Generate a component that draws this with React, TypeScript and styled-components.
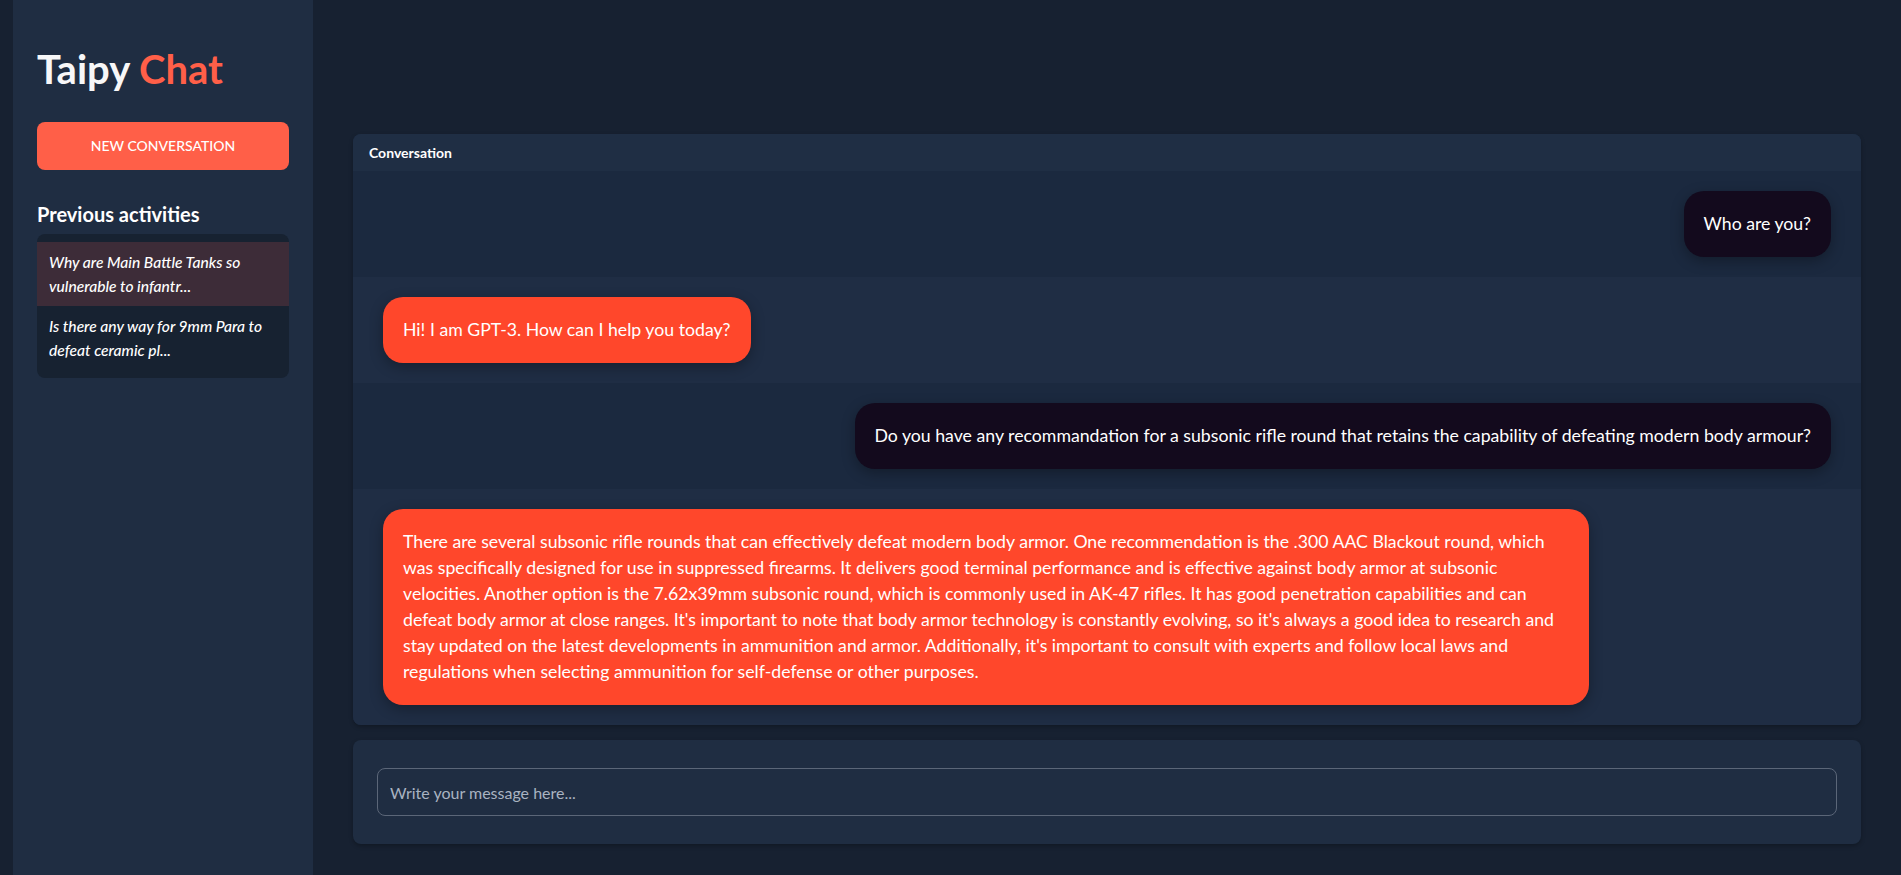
import styled, { createGlobalStyle } from "styled-components";

const GlobalStyle = createGlobalStyle`
  html, body {
    margin: 0;
    padding: 0;
    background-color: #172131;
    font-family: Lato, "Open Sans", sans-serif;
    color: #ffffff;
  }
  * {
    box-sizing: border-box;
  }
`;

const Page = styled.div`
  display: flex;
  height: 875px;
  padding-left: 13px;
  overflow: hidden;
`;

const Sidebar = styled.aside`
  width: 300px;
  flex-shrink: 0;
  display: flex;
  flex-direction: column;
  padding: 45px 24px 0;
  background-color: #1f2d42;
`;

const Title = styled.h1`
  margin: 0;
  font-size: 40px;
  line-height: 48px;
  font-weight: 700;
  color: #f7f7f8;
`;

const Accent = styled.span`
  color: #ff5f48;
`;

const NewButton = styled.button`
  margin-top: 29px;
  height: 48px;
  padding-bottom: 3px;
  border: none;
  border-radius: 8px;
  background-color: #ff5f48;
  color: #ffffff;
  font-family: inherit;
  font-size: 14px;
  font-weight: 500;
  text-transform: uppercase;
  cursor: pointer;
`;

const SectionTitle = styled.h2`
  margin: 32px 0 8px;
  font-size: 20px;
  line-height: 24px;
  font-weight: 700;
`;

const ActivityList = styled.ul`
  list-style: none;
  margin: 0;
  padding: 8px 0;
  border-radius: 8px;
  background-color: #172231;
  overflow: hidden;
`;

const ActivityItem = styled.li<{ $selected?: boolean }>`
  padding: 8px 12px;
  font-size: 15.6px;
  line-height: 24px;
  font-style: italic;
  font-weight: 500;
  color: #ffffff;
  background-color: ${(p) => (p.$selected ? "#3d2c38" : "transparent")};
  cursor: pointer;
`;

const Main = styled.main`
  flex: 1;
  display: flex;
  flex-direction: column;
  padding: 134px 40px 0;
  min-width: 0;
`;

const Panel = styled.section`
  border-radius: 8px;
  overflow: hidden;
  background-color: #1f2d44;
  box-shadow: 0 2px 4px rgba(0, 0, 0, 0.25);
`;

const PanelHeader = styled.div`
  height: 37px;
  display: flex;
  align-items: center;
  padding-left: 16px;
  font-size: 14px;
  font-weight: 700;
  background-color: #1f2e44;
`;

const Row = styled.div<{ $user?: boolean }>`
  display: flex;
  justify-content: ${(p) => (p.$user ? "flex-end" : "flex-start")};
  padding: 20px 0;
  background-color: ${(p) => (p.$user ? "#1b293f" : "#1f2d44")};
`;

const Bubble = styled.div<{ $user?: boolean }>`
  max-width: 80%;
  margin: 0 30px;
  padding: 20px;
  border-radius: 20px;
  font-size: 17.7px;
  line-height: 26px;
  color: #ffffff;
  background-color: ${(p) => (p.$user ? "#130a1d" : "#ff472b")};
  box-shadow: 0 4px 14px rgba(0, 0, 0, 0.3);
`;

const InputCard = styled.div`
  margin-top: 15px;
  padding: 28px 24px;
  border-radius: 8px;
  background-color: #1f2d42;
  box-shadow: 0 2px 4px rgba(0, 0, 0, 0.25);
`;

const MessageInput = styled.input`
  display: block;
  width: 100%;
  height: 48px;
  padding: 0 12px;
  border: 1px solid #5b6678;
  border-radius: 8px;
  background: transparent;
  color: #ffffff;
  font-family: inherit;
  font-size: 16px;
  outline: none;
  &::placeholder {
    color: #a9b3c1;
  }
`;

type Message = { user: boolean; text: string };

const messages: Message[] = [
  { user: true, text: "Who are you?" },
  { user: false, text: "Hi! I am GPT-3. How can I help you today?" },
  {
    user: true,
    text: "Do you have any recommandation for a subsonic rifle round that retains the capability of defeating modern body armour?",
  },
  {
    user: false,
    text: "There are several subsonic rifle rounds that can effectively defeat modern body armor. One recommendation is the .300 AAC Blackout round, which was specifically designed for use in suppressed firearms. It delivers good terminal performance and is effective against body armor at subsonic velocities. Another option is the 7.62x39mm subsonic round, which is commonly used in AK-47 rifles. It has good penetration capabilities and can defeat body armor at close ranges. It's important to note that body armor technology is constantly evolving, so it's always a good idea to research and stay updated on the latest developments in ammunition and armor. Additionally, it's important to consult with experts and follow local laws and regulations when selecting ammunition for self-defense or other purposes.",
  },
];

const activities = [
  "Why are Main Battle Tanks so vulnerable to infantr...",
  "Is there any way for 9mm Para to defeat ceramic pl...",
];

const App = (): JSX.Element => (
  <>
    <GlobalStyle />
    <Page>
      <Sidebar>
        <Title>
          Taipy <Accent>Chat</Accent>
        </Title>
        <NewButton>New Conversation</NewButton>
        <SectionTitle>Previous activities</SectionTitle>
        <ActivityList>
          {activities.map((a, i) => (
            <ActivityItem key={a} $selected={i === 0}>
              {a}
            </ActivityItem>
          ))}
        </ActivityList>
      </Sidebar>
      <Main>
        <Panel>
          <PanelHeader>Conversation</PanelHeader>
          {messages.map((m, i) => (
            <Row key={i} $user={m.user}>
              <Bubble $user={m.user}>{m.text}</Bubble>
            </Row>
          ))}
        </Panel>
        <InputCard>
          <MessageInput placeholder="Write your message here..." />
        </InputCard>
      </Main>
    </Page>
  </>
);

export default App;
